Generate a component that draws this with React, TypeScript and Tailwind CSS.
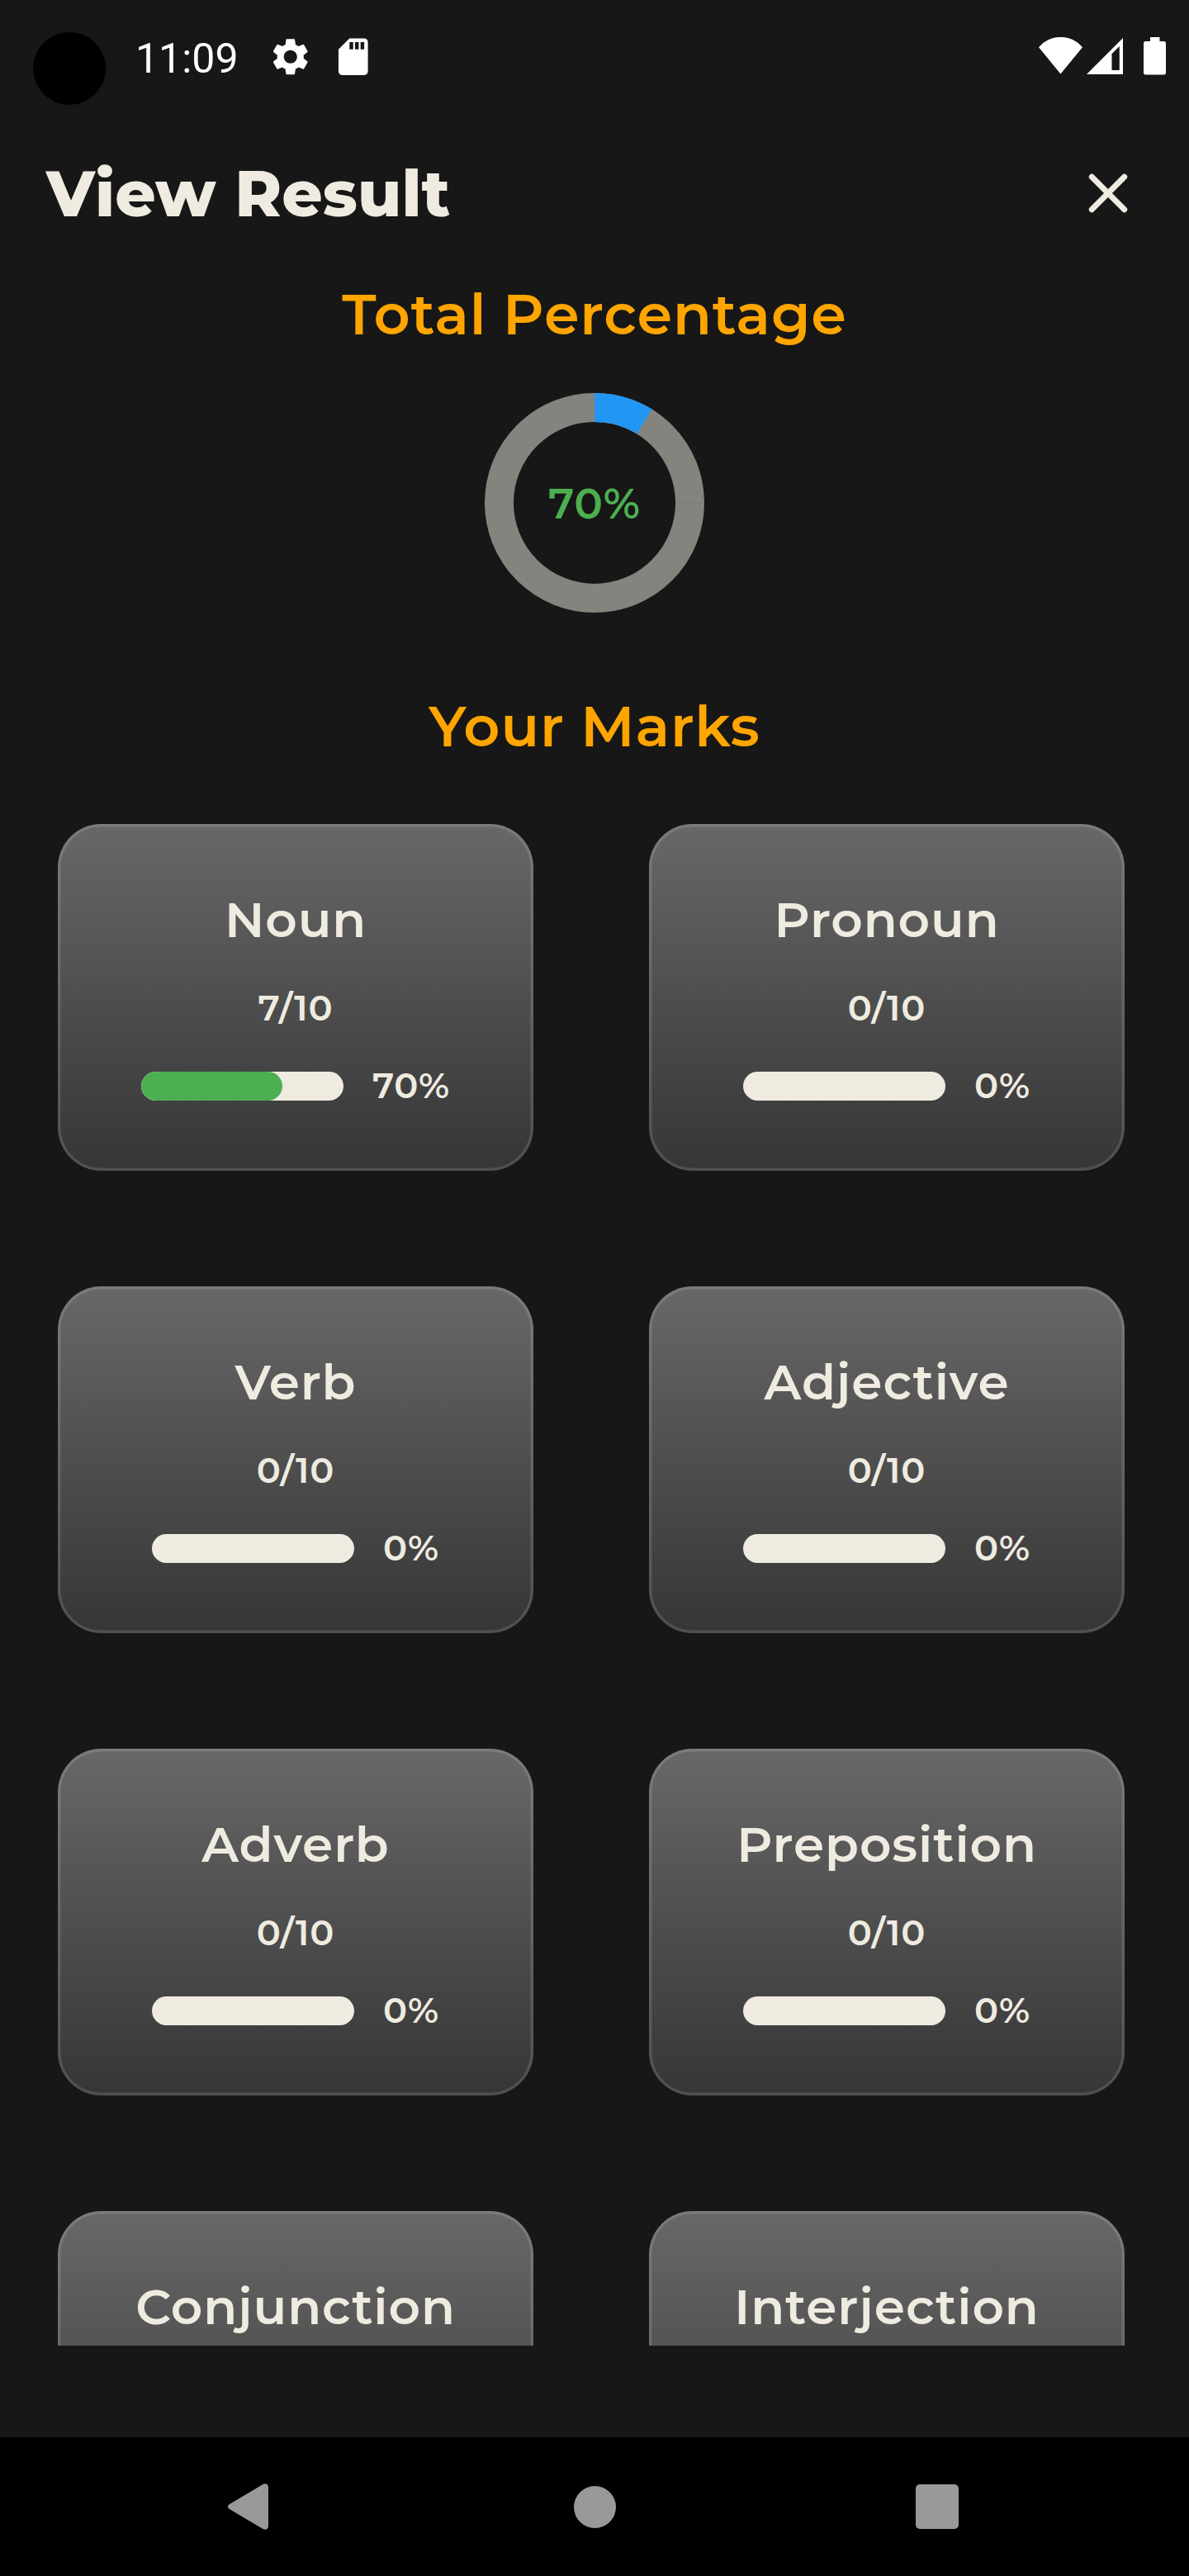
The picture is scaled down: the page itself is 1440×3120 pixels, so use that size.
import { MdSdCard, MdSettings } from "react-icons/md";

type Result = { name: string; score?: number };

// The last row is collapsed under the fold, so only its titles are listed.
const results: Result[] = [
  { name: "Noun", score: 7 },
  { name: "Pronoun", score: 0 },
  { name: "Verb", score: 0 },
  { name: "Adjective", score: 0 },
  { name: "Adverb", score: 0 },
  { name: "Preposition", score: 0 },
  { name: "Conjunction" },
  { name: "Interjection" },
];

function StatusBar() {
  return (
    <div className="flex h-[124px] shrink-0 items-start pl-10 pr-7 text-white">
      <div className="mt-[39px] size-[88px] rounded-full bg-black" />
      <span className="ml-9 mt-[41px] w-[125px] font-[Roboto] text-[50px] leading-[60px]">11:09</span>
      <MdSettings className="ml-[35.5px] mt-[41.5px] size-[53.5px]" />
      <MdSdCard className="ml-[23px] mt-[41.5px] size-[53.5px]" />
      <div className="ml-auto mt-[45px] flex">
        <svg width="53" height="46" viewBox="0 0 53 46" fill="currentColor">
          <path d="M26.5 44.5 0 12.3A34.4 34.4 0 0 1 53 12.3Z" />
        </svg>
        <svg className="ml-[4.5px]" width="44.5" height="46" viewBox="0 0 44.5 46" fill="currentColor" fillRule="evenodd">
          <path d="M0 45H44.5V0.5ZM30.5 20.3V40H39.8V11Z" />
        </svg>
        <svg className="ml-[25px]" width="27" height="46" viewBox="0 0 27 46" fill="currentColor">
          <path d="M8 0H19.5V5H24.5A2.5 2.5 0 0 1 27 7.5V43A2.5 2.5 0 0 1 24.5 45.5H2.5A2.5 2.5 0 0 1 0 43V7.5A2.5 2.5 0 0 1 2.5 5H8Z" />
        </svg>
      </div>
    </div>
  );
}

function Ring() {
  return (
    <div className="relative mx-auto mt-[54.5px] size-[266px]">
      <svg className="block" width="266" height="266" viewBox="0 0 266 266" fill="none" strokeWidth="35">
        <circle cx="133" cy="133" r="115.5" stroke="#85837d" />
        <path d="M231 133H266" stroke="#7b7973" strokeWidth="1" />
        <circle
          cx="133"
          cy="133"
          r="115.5"
          stroke="#2196f3"
          pathLength="360"
          strokeDasharray="31.5 328.5"
          transform="rotate(-90 133 133)"
        />
      </svg>
      <div className="absolute inset-0 flex items-center justify-center pt-[2px] text-[51.6px] font-semibold leading-[60px] tracking-[0.875px] text-[#4caf50]">
        70%
      </div>
    </div>
  );
}

function Card({ name, score }: Result) {
  return (
    <div className="h-[420px] rounded-[52.5px] bg-linear-to-b from-[#686868] to-[#363636] pt-[80.5px] text-center font-semibold tracking-[0.875px] shadow-[inset_0_0_0_3.5px_rgba(255,255,255,0.13)]">
      <div className="text-[59.8px] leading-[70px]">{name}</div>
      {score !== undefined && (
        <>
          <div className="mt-[47px] text-[43.2px] leading-[50px]">{score}/10</div>
          <div className="mt-[44.5px] flex items-center justify-center gap-[35px] text-[43.2px] leading-[50px]">
            <div className="h-[35px] w-[245px] overflow-hidden rounded-full bg-[#efebe0]">
              <div className="h-full rounded-full bg-[#4caf50]" style={{ width: `${score * 10}%` }} />
            </div>
            <span>{score * 10}%</span>
          </div>
        </>
      )}
    </div>
  );
}

function NavBar() {
  return (
    <div className="flex h-[168px] shrink-0 items-center bg-black pl-[276px] text-[#999999]">
      <svg width="49" height="56" viewBox="0 0 49 56" fill="currentColor">
        <path d="M2 25 42 1.2C45 -1 49 .8 49 4.3V51.7C49 55.2 45 57 42 54.8L2 31C-.7 29.4-.7 26.6 2 25Z" />
      </svg>
      <div className="ml-[370px] size-[51px] rounded-full bg-current" />
      <div className="ml-[363px] h-[54px] w-[52px] rounded-[5px] bg-current" />
    </div>
  );
}

export default function App() {
  return (
    <div className="flex h-[3120px] w-[1440px] flex-col overflow-hidden bg-[#171717] font-[Montserrat,Inter,sans-serif] text-[#efebe0]">
      <StatusBar />
      <header className="mt-[60px] flex h-[100px] shrink-0 items-center justify-between pl-14 pr-[74px]">
        <h1 className="text-[77px] font-extrabold leading-[100px] tracking-[0.1px]">View Result</h1>
        <svg width="48" height="48" viewBox="0 0 48 48" fill="none" stroke="currentColor" strokeWidth="7" strokeLinecap="round">
          <path d="M4.3 4.3 43.7 43.7M43.7 4.3 4.3 43.7" />
        </svg>
      </header>
      <h2 className="mt-[57px] text-center text-[68.5px] font-semibold leading-[80px] tracking-[0.875px] text-[#ffa500]">
        Total Percentage
      </h2>
      <Ring />
      <h2 className="mt-[98px] text-center text-[68.5px] font-semibold leading-[80px] tracking-[0.875px] text-[#ffa500]">
        Your Marks
      </h2>
      <main className="mt-[78.5px] grid h-[1843px] shrink-0 grid-cols-[576px_576px] content-start gap-[140px] overflow-hidden pl-[70px]">
        {results.map((r) => (
          <Card key={r.name} name={r.name} score={r.score} />
        ))}
      </main>
      <div className="flex-1" />
      <NavBar />
    </div>
  );
}
